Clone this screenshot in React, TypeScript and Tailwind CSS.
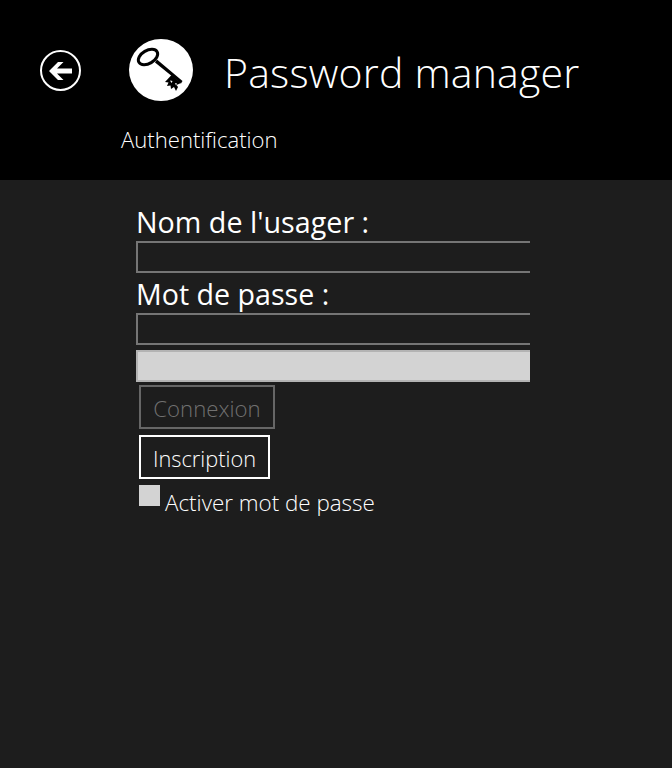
export default function App() {
  return (
    <div className="h-[768px] w-[672px] overflow-hidden bg-[#1d1d1d] font-['Open_Sans',sans-serif] text-white">
      <header className="h-[180px] bg-black pl-10 pt-[39px]">
        <div className="flex items-center">
          <svg width="41" height="41" viewBox="0 0 41 41" className="mt-[1px]">
            <circle cx="20.5" cy="20.5" r="19.5" fill="none" stroke="#fff" strokeWidth="2" />
            <path d="M9 21 L18 12 H23.5 L17 18.5 H32 V23.5 H17 L23.5 30 H18 Z" fill="#fff" />
          </svg>
          <svg width="64" height="62" viewBox="0 0 64 62" className="ml-[48px]">
            <ellipse cx="32" cy="31" rx="32" ry="31" fill="#fff" />
            <ellipse cx="19" cy="18" rx="10.5" ry="6.5" transform="rotate(-30 19 18)" fill="none" stroke="#000" strokeWidth="3" />
            <path d="M26 23.5 L28 20.5 L53.5 42 L52 44.5 Z" fill="#000" />
            <path d="M42.5 36 L36 43 L39.5 43.5 L38 47 L41.5 46.5 L42 50 L45 48 L47 52 L49 48 L47.5 46 L52 44 Z" fill="#000" />
            <path d="M41 41.5 l2.5 0.5 l-1 2 Z M46 44 l2 0.5 l-1 2 Z" fill="#fff" />
          </svg>
          <h1 className="ml-[31px] mt-[5px] text-[41px] font-light leading-none tracking-[0.2px]">Password manager</h1>
        </div>
        <div className="ml-[81px] mt-[23px] text-[22.1px] font-light leading-[30px]">Authentification</div>
      </header>
      <main className="ml-[136px] mt-[24px] w-[394px]">
        <div className="mb-[1px] text-[28.7px] leading-[36px]">Nom de l'usager :</div>
        <div className="h-[32px] border-2 border-r-0 border-[#757575]" />
        <div className="mb-[1px] pt-[3px] text-[28.6px] leading-[36px]">Mot de passe :</div>
        <div className="h-[32px] border-2 border-r-0 border-[#757575]" />
        <div className="mt-[5px] h-[32px] border-2 border-r-0 border-[#b3b3b3] bg-[#d3d3d3]" />
        <button className="ml-[3px] mt-[3px] block h-[44px] w-[136px] border-2 border-[#666666] pt-[4px] text-[22.2px] font-light text-[#707070]">Connexion</button>
        <button className="ml-[3px] mt-[6px] block h-[44px] w-[131px] border-2 border-white pt-[4px] text-[21.8px] font-light text-white">Inscription</button>
        <div className="ml-[3px] mt-[6px] flex items-start">
          <div className="h-[21px] w-[21px] bg-[#d3d3d3]" />
          <span className="ml-[5px] mt-[2px] text-[22.4px] font-light leading-[32px]">Activer mot de passe</span>
        </div>
      </main>
    </div>
  );
}
